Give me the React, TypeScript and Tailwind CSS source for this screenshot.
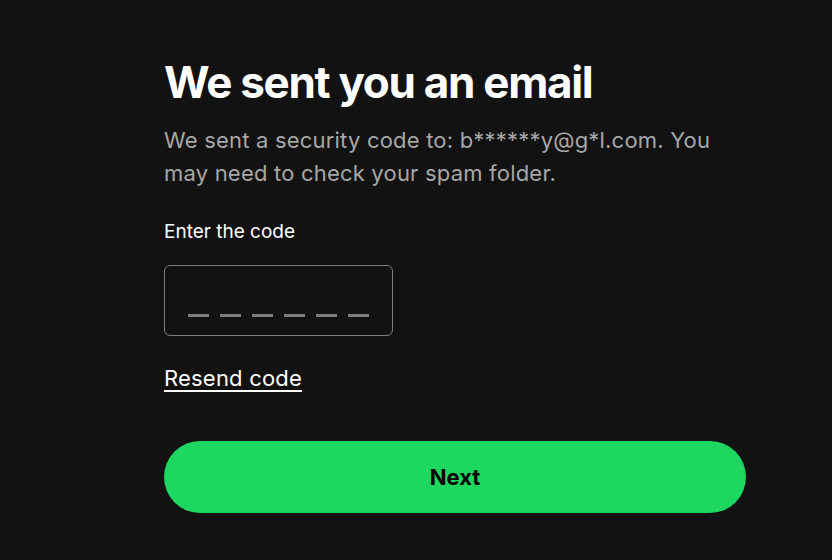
export default function App() {
  const dashes = [0, 1, 2, 3, 4, 5];

  return (
    <div className="min-h-[560px] w-full bg-[#121212] font-['Inter','Liberation_Sans',sans-serif]">
      <div className="ml-[164px] w-[582px] pt-[56px]">
        {/* Heading */}
        <h1 className="text-[44px] font-bold leading-[52px] tracking-[-1.3px] text-white">
          We sent you an email
        </h1>
        <p className="mt-[16px] text-[22px] leading-[33px] tracking-[0.2px] text-[#a7a7a7]">
          We sent a security code to: b******y@g*l.com. You may need to check your spam folder.
        </p>

        {/* Code input */}
        <label className="mt-[30px] block text-[19px] leading-[24px] text-white">Enter the code</label>
        <div className="mt-[21px] flex h-[71px] w-[229px] items-end justify-center gap-[11px] rounded-[6px] border border-[#7c7c7c] pb-[18px]">
          {dashes.map((d) => (
            <span key={d} className="h-[3px] w-[21px] bg-[#7c7c7c]" />
          ))}
        </div>

        <a className="mt-[28px] inline-block text-[22px] leading-[28px] tracking-[0.2px] text-white underline underline-offset-[4px]">
          Resend code
        </a>

        {/* Action */}
        <button className="mt-[49px] flex h-[72px] w-[582px] items-center justify-center rounded-full bg-[#1ed760] text-[22px] font-bold text-black">
          Next
        </button>
      </div>
    </div>
  );
}
